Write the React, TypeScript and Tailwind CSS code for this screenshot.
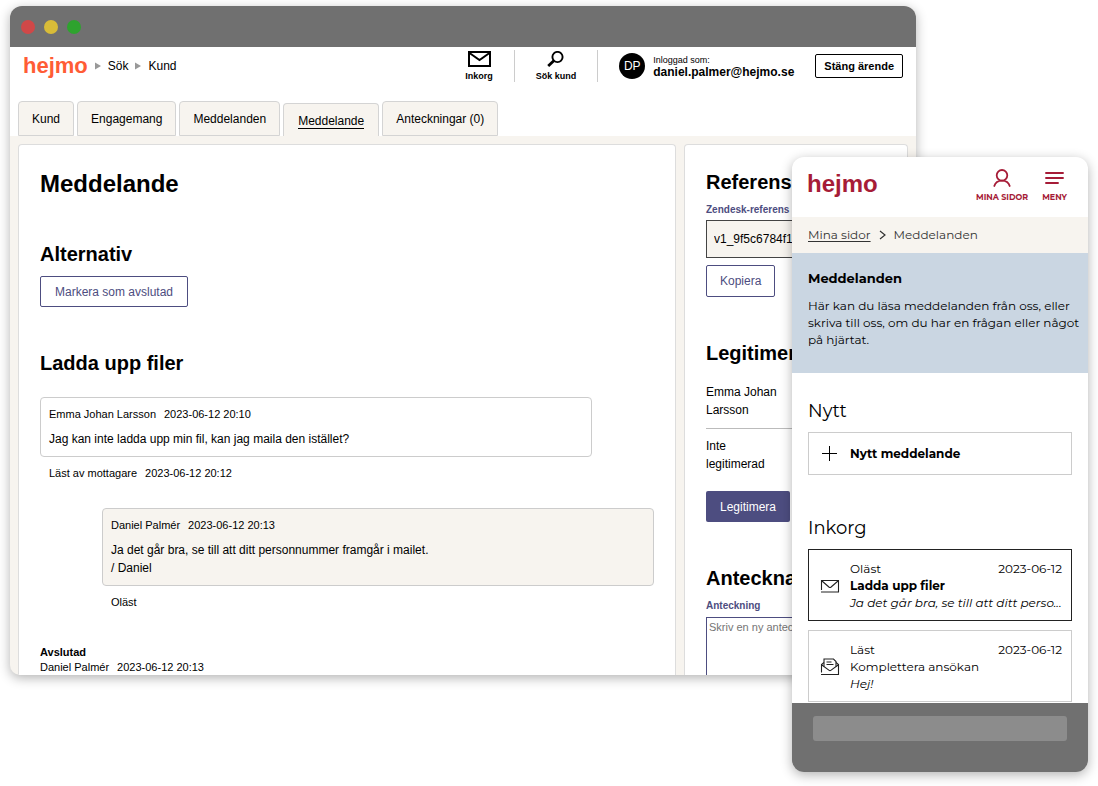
import React from 'react';

interface MessageProps {
  author: string;
  date: string;
  status: string;
  readAt?: string;
  own?: boolean;
  children: React.ReactNode;
}

interface InboxItemProps {
  status: string;
  date: string;
  title: string;
  preview: string;
  unread?: boolean;
}

const tabs = [
  { id: 'kund', label: 'Kund' },
  { id: 'engagemang', label: 'Engagemang' },
  { id: 'meddelanden', label: 'Meddelanden' },
  { id: 'meddelande', label: 'Meddelande' },
  { id: 'anteckningar', label: 'Anteckningar (0)' },
];

const Arrow = () => (
  <svg width="6" height="8" viewBox="0 0 6 8" fill="#999999" aria-hidden="true">
    <path d="M0 0.5 6 4 0 7.5z" />
  </svg>
);

const MailIcon = () => (
  <svg width="24" height="16" viewBox="0 0 24 16" fill="none" stroke="#000" strokeWidth="2" aria-hidden="true">
    <rect x="2" y="1" width="21" height="14" />
    <path d="M2.5 2 12.5 9 22.5 2" />
  </svg>
);

const SearchIcon = () => (
  <svg width="17" height="16" viewBox="0 0 17 16" fill="none" stroke="#000" aria-hidden="true">
    <circle cx="10.5" cy="6" r="5.1" strokeWidth="1.9" />
    <path d="M6.8 9.7 1.2 15" strokeWidth="2.8" />
  </svg>
);

const UserIcon = () => (
  <svg width="18" height="18" viewBox="0 0 18 18" fill="none" stroke="currentColor" strokeWidth="1.8" strokeLinecap="round" aria-hidden="true">
    <circle cx="9" cy="6.3" r="5.3" />
    <path d="M1.3 17C2.3 13.4 5.2 11.6 9 11.6s6.7 1.8 7.7 5.4" />
  </svg>
);

const MenuIcon = () => (
  <svg width="19" height="18" viewBox="0 0 19 18" fill="none" stroke="currentColor" strokeWidth="1.9" strokeLinecap="round" aria-hidden="true">
    <path d="M1 4h17M1 9h17M1 14h12" />
  </svg>
);

const EnvelopeIcon = () => (
  <svg width="20" height="20" viewBox="0 0 20 20" fill="none" stroke="#222" strokeWidth="1.1" aria-hidden="true">
    <path d="M1 16H18.5V4.5H1.5V14" />
    <path d="M2 5 9.2 11.2q.8.6 1.6 0L18 5" />
  </svg>
);

const OpenEnvelopeIcon = () => (
  <svg width="20" height="20" viewBox="0 0 20 20" fill="none" stroke="#222" strokeWidth="1.1" aria-hidden="true">
    <path d="M1 17.5H18.5V7.5L16 5.5M4 5.5 1.5 7.5V15.5" />
    <path d="M4 9.5V2H13.5L16 4.5V9.5" />
    <path d="M6.5 5h5M6.5 7.5h7" />
    <path d="M1.5 7.8 9.2 13.4q.8.5 1.6 0L18.5 7.8" />
  </svg>
);

const Message: React.FC<MessageProps> = ({ author, date, status, readAt, own, children }) => (
  <article className={own ? 'mt-[27px] ml-[62px]' : 'mt-5 mr-[62px]'}>
    <div className={`rounded border border-[#cccccc] p-2 ${own ? 'bg-[#f7f4ef]' : 'bg-white'}`}>
      <p className="flex gap-2 text-[11px] leading-4">
        <span>{author}</span>
        <time>{date}</time>
      </p>
      <p className="mt-2 text-xs leading-[18px]">{children}</p>
    </div>
    <p className="mt-2 flex gap-2 px-[9px] text-[11px] leading-4">
      <span>{status}</span>
      {readAt && <time>{readAt}</time>}
    </p>
  </article>
);

const InboxItem: React.FC<InboxItemProps> = ({ status, date, title, preview, unread }) => (
  <li>
    <a
      href="#meddelande"
      className={`flex items-center gap-2.5 border pt-2.5 pr-[9px] pb-[9px] pl-[11px] text-xs leading-[17px] ${
        unread ? 'border-[#222222]' : 'border-[#cccccc]'
      }`}
    >
      <span className="shrink-0">{unread ? <EnvelopeIcon /> : <OpenEnvelopeIcon />}</span>
      <span className="flex-1">
        <span className="flex justify-between">
          <span>{status}</span>
          <time>{date}</time>
        </span>
        <span className={unread ? 'block font-bold' : 'block'}>{title}</span>
        <span className="block whitespace-nowrap italic">{preview}</span>
      </span>
    </a>
  </li>
);

const DesktopHeader = () => (
  <header className="bg-white">
    <div className="flex h-[38px] items-center pr-[13px] pl-[13px]">
      <a href="#start" className="text-[22px] leading-6 font-bold text-[#ff5c35]">hejmo</a>
      <nav aria-label="Sökväg" className="ml-[7px] flex items-center gap-[7px] text-xs">
        <Arrow />
        <a href="#sok">Sök</a>
        <Arrow />
        <a href="#kund">Kund</a>
      </nav>
      <div className="ml-auto flex items-center gap-[21px]">
        <a href="#inkorg" className="flex flex-col items-center gap-1 text-[9px] leading-[10px] font-bold">
          <MailIcon />
          Inkorg
        </a>
        <span className="h-8 w-px bg-[#cccccc]" />
        <a href="#sokkund" className="flex flex-col items-center gap-1 text-[9px] leading-[10px] font-bold">
          <SearchIcon />
          Sök kund
        </a>
        <span className="h-8 w-px bg-[#cccccc]" />
        <div className="flex items-center gap-2">
          <span className="flex size-[26px] items-center justify-center rounded-full bg-black text-xs text-white">DP</span>
          <p className="text-[9px] leading-3">
            Inloggad som:
            <span className="block text-xs leading-3 font-bold">daniel.palmer@hejmo.se</span>
          </p>
        </div>
        <button className="h-6 rounded-xs border border-black px-2 text-[11px] font-bold">Stäng ärende</button>
      </div>
    </div>
    <nav aria-label="Flikar" className="mt-4 flex items-end gap-[3px] px-2">
      {tabs.map((tab) =>
        tab.id === 'meddelande' ? (
          <a
            key={tab.id}
            href="#meddelande"
            aria-current="page"
            className="flex h-[33px] items-center rounded-t border border-b-0 border-[#d4d4d4] bg-[#f7f4ef] px-3.5 pt-0.5 text-xs"
          >
            <span className="border-b border-black leading-[14px]">{tab.label}</span>
          </a>
        ) : (
          <a
            key={tab.id}
            href={`#${tab.id}`}
            className="flex h-[35px] items-center rounded-t border border-[#d4d4d4] bg-[#f7f4ef] px-[13px] text-xs"
          >
            {tab.label}
          </a>
        )
      )}
    </nav>
  </header>
);

const CaseView = () => (
  <main className="min-w-0 flex-1 rounded-t border border-b-0 border-[#dddddd] bg-white px-[21px] pt-[23px]">
    <h1 className="text-2xl leading-8 font-bold">Meddelande</h1>
    <h2 className="mt-10 text-xl leading-7 font-bold">Alternativ</h2>
    <button className="mt-2 h-[31px] rounded-xs border border-[#4d4d80] px-3.5 text-xs text-[#4d4d80]">
      Markera som avslutad
    </button>
    <h2 className="mt-[42px] text-xl leading-7 font-bold">Ladda upp filer</h2>
    <Message author="Emma Johan Larsson" date="2023-06-12 20:10" status="Läst av mottagare" readAt="2023-06-12 20:12">
      Jag kan inte ladda upp min fil, kan jag maila den istället?
    </Message>
    <Message author="Daniel Palmér" date="2023-06-12 20:13" status="Oläst" own>
      Ja det går bra, se till att ditt personnummer framgår i mailet.
      <br />/ Daniel
    </Message>
    <div className="mt-[35px] text-[11px] leading-[15px]">
      <p className="font-bold">Avslutad</p>
      <p className="flex gap-2">
        <span>Daniel Palmér</span>
        <time>2023-06-12 20:13</time>
      </p>
    </div>
  </main>
);

const CaseAside = () => (
  <aside className="flex w-56 shrink-0 flex-col items-start rounded-t border border-b-0 border-[#dddddd] bg-white px-[21px] pt-[23px]">
    <h2 className="text-xl leading-7 font-bold">Referens</h2>
    <label htmlFor="reference" className="mt-1.5 text-[10px] leading-4 font-bold text-[#4d4d80]">
      Zendesk-referens
    </label>
    <input
      id="reference"
      readOnly
      defaultValue="v1_9f5c6784f1"
      className="mt-0.5 h-[38px] w-full border border-[#444444] bg-[#f7f4ef] px-[7px] text-xs"
    />
    <button className="mt-[7px] h-8 rounded-xs border border-[#4d4d80] px-[13px] text-xs text-[#4d4d80]">Kopiera</button>
    <h2 className="mt-[42px] text-xl leading-7 font-bold">Legitimering</h2>
    <div className="mt-4 w-full border-b border-[#bbbbbb] pb-[9px] text-xs leading-[18px]">
      <p className="w-24">Emma Johan Larsson</p>
    </div>
    <div className="w-full pt-2 text-xs leading-[18px]">
      <p className="w-20">Inte legitimerad</p>
    </div>
    <button className="mt-[18px] h-[31px] rounded-xs bg-[#4d4d80] px-3.5 text-xs text-white">Legitimera</button>
    <h2 className="mt-[42px] text-xl leading-7 font-bold">Anteckna</h2>
    <label htmlFor="note" className="mt-1.5 text-[10px] leading-4 font-bold text-[#4d4d80]">
      Anteckning
    </label>
    <textarea
      id="note"
      placeholder="Skriv en ny anteckning"
      className="mt-[3px] w-full flex-1 resize-none border border-b-0 border-[#4d4d80] px-0.5 pt-0.5 text-[11px] leading-[14px] placeholder:text-[#757575]"
    />
  </aside>
);

const DesktopWindow = () => (
  <div className="overflow-hidden rounded-t-xl rounded-b-[10px] bg-[#f7f4ef] font-['Liberation_Sans',Arial,sans-serif] text-black shadow-[0_3px_12px_rgba(0,0,0,0.3)]">
    <div className="flex h-[41px] items-center gap-[9px] bg-[#707070] px-[11px]">
      <span className="size-3.5 rounded-full bg-[#d04848]" />
      <span className="size-3.5 rounded-full bg-[#d8bc38]" />
      <span className="size-3.5 rounded-full bg-[#2ea32e]" />
    </div>
    <DesktopHeader />
    <div className="flex gap-2 px-2 pt-2">
      <CaseView />
      <CaseAside />
    </div>
  </div>
);

const PhoneWindow = () => (
  <div className="overflow-hidden rounded-xl bg-white font-[Montserrat,Inter,sans-serif] text-black shadow-[0_3px_12px_rgba(0,0,0,0.3)]">
    <header className="flex h-[60px] items-center justify-between pr-[21px] pl-[15px] text-[#a61c37]">
      <a href="#hem" className="mb-1.5 font-['Liberation_Sans',Arial,sans-serif] text-2xl font-bold">hejmo</a>
      <nav aria-label="Meny" className="mb-[3px] flex gap-3.5 text-[8px] leading-[10px] font-bold">
        <a href="#minasidor" className="flex flex-col items-center gap-[5px]">
          <UserIcon />
          MINA SIDOR
        </a>
        <button className="flex flex-col items-center gap-[5px]">
          <MenuIcon />
          MENY
        </button>
      </nav>
    </header>
    <nav aria-label="Brödsmulor" className="flex h-9 items-center gap-2 bg-[#f7f4ef] px-4 text-xs text-[#333333]">
      <a href="#minasidor" className="underline underline-offset-2">Mina sidor</a>
      <svg width="7" height="10" viewBox="0 0 7 10" fill="none" stroke="#333" strokeWidth="1.2" aria-hidden="true">
        <path d="M1 1 6 5 1 9" />
      </svg>
      <span>Meddelanden</span>
    </nav>
    <section className="bg-[#cad6e2] pt-4 pr-2 pb-[25px] pl-4">
      <h1 className="text-[13px] leading-[18px] font-bold">Meddelanden</h1>
      <p className="mt-2.5 text-xs leading-[17px]">
        Här kan du läsa meddelanden från oss, eller skriva till oss, om du har en frågan eller något på hjärtat.
      </p>
    </section>
    <section className="px-4 pt-[26px]">
      <h2 className="text-lg leading-6">Nytt</h2>
      <button className="mt-[9px] flex h-[43px] w-full items-center gap-[13px] border border-[#cccccc] px-[13px] text-xs font-bold">
        <svg width="15" height="15" viewBox="0 0 15 15" stroke="#000" aria-hidden="true">
          <path d="M7.5 0v15M0 7.5h15" />
        </svg>
        Nytt meddelande
      </button>
      <h2 className="mt-[41px] text-lg leading-6">Inkorg</h2>
      <ul className="mt-[9px] flex flex-col gap-[9px] pb-px">
        <InboxItem
          unread
          status="Oläst"
          date="2023-06-12"
          title="Ladda upp filer"
          preview="Ja det går bra, se till att ditt perso..."
        />
        <InboxItem status="Läst" date="2023-06-12" title="Komplettera ansökan" preview="Hej!" />
      </ul>
    </section>
    <footer className="bg-[#707070] px-[21px] pt-[13px] pb-[31px]">
      <div className="h-[25px] rounded-[3px] bg-[#8c8c8c]" />
    </footer>
  </div>
);

export default function App() {
  return (
    <div className="relative min-h-screen bg-white pt-1.5 pr-[182px] pb-6 pl-2.5">
      <DesktopWindow />
      <div className="absolute top-[157px] right-2.5 w-[296px]">
        <PhoneWindow />
      </div>
    </div>
  );
}
